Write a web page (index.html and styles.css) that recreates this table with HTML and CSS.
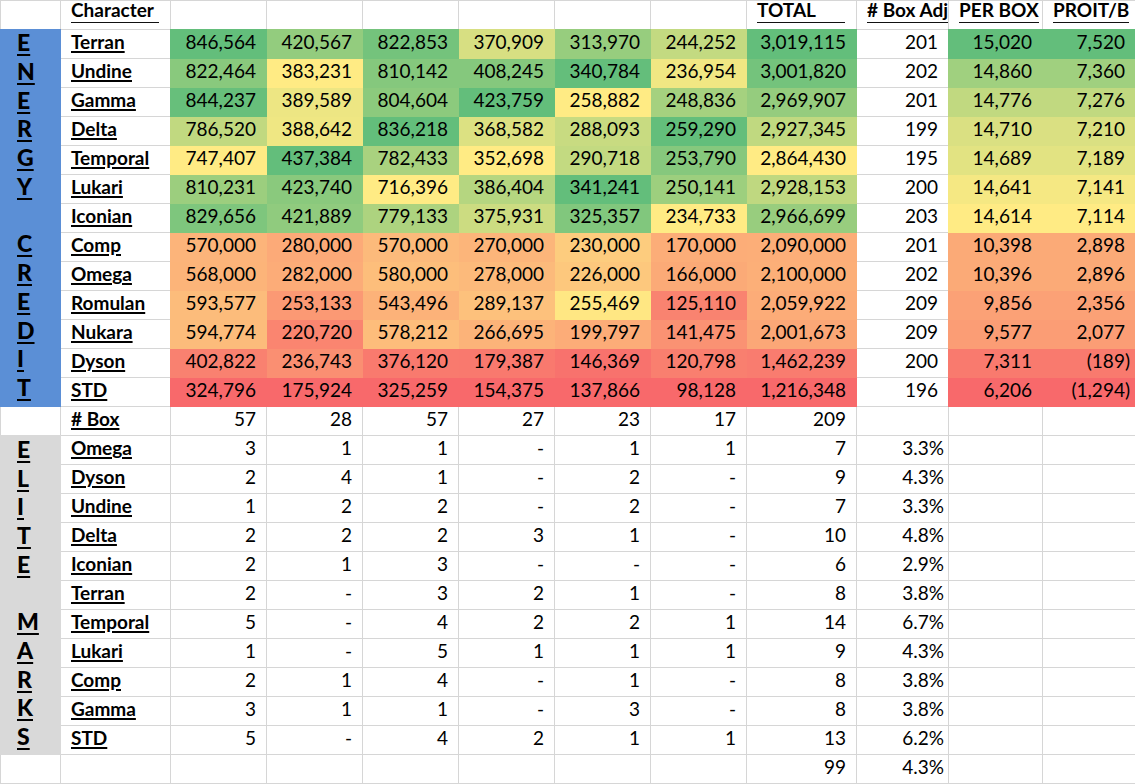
FILE: index.html
```html
<!DOCTYPE html>
<html lang="en">
<head>
<meta charset="utf-8">
<title>Box Profit Sheet</title>
<link rel="stylesheet" href="styles.css">
</head>
<body>
<table class="sheet">
<colgroup>
<col class="c-a"><col class="c-b"><col class="c-d"><col class="c-d"><col class="c-d"><col class="c-d"><col class="c-d"><col class="c-d"><col class="c-t"><col class="c-x"><col class="c-p"><col class="c-q">
</colgroup>
<tbody>
<tr class="hd">
<td></td><td class="h"><span class="hl w88">Character</span></td><td></td><td></td><td></td><td></td><td></td><td></td>
<td class="h"><span class="hl w88">TOTAL</span></td><td class="h"><span class="hl">#&nbsp;Box Adj</span></td><td class="h"><span class="hl w76">PER BOX</span></td><td class="h"><span class="hl">PROIT/B</span></td>
</tr>
<tr class="en">
<td class="side energy" rowspan="13"><div class="letters"><span><u>E</u></span><span><u>N</u></span><span><u>E</u></span><span><u>R</u></span><span><u>G</u></span><span><u>Y</u></span><span></span><span><u>C</u></span><span><u>R</u></span><span><u>E</u></span><span><u>D</u></span><span><u>I</u></span><span><u>T</u></span></div></td>
<td class="nm">Terran</td><td class="n sc">846,564</td><td class="n sc">420,567</td><td class="n sc">822,853</td><td class="n sc">370,909</td><td class="n sc">313,970</td><td class="n sc">244,252</td><td class="n sc">3,019,115</td><td class="n">201</td><td class="n sc">15,020</td><td class="n sc">7,520</td></tr>
<tr class="en"><td class="nm">Undine</td><td class="n sc">822,464</td><td class="n sc">383,231</td><td class="n sc">810,142</td><td class="n sc">408,245</td><td class="n sc">340,784</td><td class="n sc">236,954</td><td class="n sc">3,001,820</td><td class="n">202</td><td class="n sc">14,860</td><td class="n sc">7,360</td></tr>
<tr class="en"><td class="nm">Gamma</td><td class="n sc">844,237</td><td class="n sc">389,589</td><td class="n sc">804,604</td><td class="n sc">423,759</td><td class="n sc">258,882</td><td class="n sc">248,836</td><td class="n sc">2,969,907</td><td class="n">201</td><td class="n sc">14,776</td><td class="n sc">7,276</td></tr>
<tr class="en"><td class="nm">Delta</td><td class="n sc">786,520</td><td class="n sc">388,642</td><td class="n sc">836,218</td><td class="n sc">368,582</td><td class="n sc">288,093</td><td class="n sc">259,290</td><td class="n sc">2,927,345</td><td class="n">199</td><td class="n sc">14,710</td><td class="n sc">7,210</td></tr>
<tr class="en"><td class="nm">Temporal</td><td class="n sc">747,407</td><td class="n sc">437,384</td><td class="n sc">782,433</td><td class="n sc">352,698</td><td class="n sc">290,718</td><td class="n sc">253,790</td><td class="n sc">2,864,430</td><td class="n">195</td><td class="n sc">14,689</td><td class="n sc">7,189</td></tr>
<tr class="en"><td class="nm">Lukari</td><td class="n sc">810,231</td><td class="n sc">423,740</td><td class="n sc">716,396</td><td class="n sc">386,404</td><td class="n sc">341,241</td><td class="n sc">250,141</td><td class="n sc">2,928,153</td><td class="n">200</td><td class="n sc">14,641</td><td class="n sc">7,141</td></tr>
<tr class="en"><td class="nm">Iconian</td><td class="n sc">829,656</td><td class="n sc">421,889</td><td class="n sc">779,133</td><td class="n sc">375,931</td><td class="n sc">325,357</td><td class="n sc">234,733</td><td class="n sc">2,966,699</td><td class="n">203</td><td class="n sc">14,614</td><td class="n sc">7,114</td></tr>
<tr class="en"><td class="nm">Comp</td><td class="n sc">570,000</td><td class="n sc">280,000</td><td class="n sc">570,000</td><td class="n sc">270,000</td><td class="n sc">230,000</td><td class="n sc">170,000</td><td class="n sc">2,090,000</td><td class="n">201</td><td class="n sc">10,398</td><td class="n sc">2,898</td></tr>
<tr class="en"><td class="nm">Omega</td><td class="n sc">568,000</td><td class="n sc">282,000</td><td class="n sc">580,000</td><td class="n sc">278,000</td><td class="n sc">226,000</td><td class="n sc">166,000</td><td class="n sc">2,100,000</td><td class="n">202</td><td class="n sc">10,396</td><td class="n sc">2,896</td></tr>
<tr class="en"><td class="nm">Romulan</td><td class="n sc">593,577</td><td class="n sc">253,133</td><td class="n sc">543,496</td><td class="n sc">289,137</td><td class="n sc">255,469</td><td class="n sc">125,110</td><td class="n sc">2,059,922</td><td class="n">209</td><td class="n sc">9,856</td><td class="n sc">2,356</td></tr>
<tr class="en"><td class="nm">Nukara</td><td class="n sc">594,774</td><td class="n sc">220,720</td><td class="n sc">578,212</td><td class="n sc">266,695</td><td class="n sc">199,797</td><td class="n sc">141,475</td><td class="n sc">2,001,673</td><td class="n">209</td><td class="n sc">9,577</td><td class="n sc">2,077</td></tr>
<tr class="en"><td class="nm">Dyson</td><td class="n sc">402,822</td><td class="n sc">236,743</td><td class="n sc">376,120</td><td class="n sc">179,387</td><td class="n sc">146,369</td><td class="n sc">120,798</td><td class="n sc">1,462,239</td><td class="n">200</td><td class="n sc">7,311</td><td class="n sc ng">(189)</td></tr>
<tr class="en"><td class="nm">STD</td><td class="n sc">324,796</td><td class="n sc">175,924</td><td class="n sc">325,259</td><td class="n sc">154,375</td><td class="n sc">137,866</td><td class="n sc">98,128</td><td class="n sc">1,216,348</td><td class="n">196</td><td class="n sc">6,206</td><td class="n sc ng">(1,294)</td></tr>
<tr><td></td><td class="nm">#&nbsp;Box</td><td class="n">57</td><td class="n">28</td><td class="n">57</td><td class="n">27</td><td class="n">23</td><td class="n">17</td><td class="n">209</td><td></td><td></td><td></td></tr>
<tr>
<td class="side elite" rowspan="11"><div class="letters"><span><u>E</u></span><span><u>L</u></span><span><u>I</u></span><span><u>T</u></span><span><u>E</u></span><span></span><span><u>M</u></span><span><u>A</u></span><span><u>R</u></span><span><u>K</u></span><span><u>S</u></span></div></td>
<td class="nm">Omega</td><td class="n">3</td><td class="n">1</td><td class="n">1</td><td class="n">-</td><td class="n">1</td><td class="n">1</td><td class="n">7</td><td class="n p">3.3%</td><td></td><td></td></tr>
<tr><td class="nm">Dyson</td><td class="n">2</td><td class="n">4</td><td class="n">1</td><td class="n">-</td><td class="n">2</td><td class="n">-</td><td class="n">9</td><td class="n p">4.3%</td><td></td><td></td></tr>
<tr><td class="nm">Undine</td><td class="n">1</td><td class="n">2</td><td class="n">2</td><td class="n">-</td><td class="n">2</td><td class="n">-</td><td class="n">7</td><td class="n p">3.3%</td><td></td><td></td></tr>
<tr><td class="nm">Delta</td><td class="n">2</td><td class="n">2</td><td class="n">2</td><td class="n">3</td><td class="n">1</td><td class="n">-</td><td class="n">10</td><td class="n p">4.8%</td><td></td><td></td></tr>
<tr><td class="nm">Iconian</td><td class="n">2</td><td class="n">1</td><td class="n">3</td><td class="n">-</td><td class="n">-</td><td class="n">-</td><td class="n">6</td><td class="n p">2.9%</td><td></td><td></td></tr>
<tr><td class="nm">Terran</td><td class="n">2</td><td class="n">-</td><td class="n">3</td><td class="n">2</td><td class="n">1</td><td class="n">-</td><td class="n">8</td><td class="n p">3.8%</td><td></td><td></td></tr>
<tr><td class="nm">Temporal</td><td class="n">5</td><td class="n">-</td><td class="n">4</td><td class="n">2</td><td class="n">2</td><td class="n">1</td><td class="n">14</td><td class="n p">6.7%</td><td></td><td></td></tr>
<tr><td class="nm">Lukari</td><td class="n">1</td><td class="n">-</td><td class="n">5</td><td class="n">1</td><td class="n">1</td><td class="n">1</td><td class="n">9</td><td class="n p">4.3%</td><td></td><td></td></tr>
<tr><td class="nm">Comp</td><td class="n">2</td><td class="n">1</td><td class="n">4</td><td class="n">-</td><td class="n">1</td><td class="n">-</td><td class="n">8</td><td class="n p">3.8%</td><td></td><td></td></tr>
<tr><td class="nm">Gamma</td><td class="n">3</td><td class="n">1</td><td class="n">1</td><td class="n">-</td><td class="n">3</td><td class="n">-</td><td class="n">8</td><td class="n p">3.8%</td><td></td><td></td></tr>
<tr><td class="nm">STD</td><td class="n">5</td><td class="n">-</td><td class="n">4</td><td class="n">2</td><td class="n">1</td><td class="n">1</td><td class="n">13</td><td class="n p">6.2%</td><td></td><td></td></tr>
<tr><td></td><td></td><td></td><td></td><td></td><td></td><td></td><td></td><td class="n">99</td><td class="n p">4.3%</td><td></td><td></td></tr>
</tbody>
</table>
<script src="script.js"></script>
</body>
</html>
```
FILE: styles.css
```css
* { box-sizing: border-box; }
body {
  margin: 0;
  background: #ffffff;
  color: #000000;
  font-family: Lato, "Open Sans", "Liberation Sans", sans-serif;
}
.sheet {
  border-collapse: collapse;
  table-layout: fixed;
  width: 1135px;
  font-size: 19px;
}
.c-a { width: 60px; }
.c-b { width: 110px; }
.c-d { width: 96px; }
.c-t { width: 110px; }
.c-x { width: 92px; }
.c-p { width: 94px; }
.c-q { width: 93px; }
.sheet tr { height: 29px; }
.sheet td {
  border: 1px solid #d6d6d6;
  padding: 0 0 5px 0;
  line-height: 22px;
  vertical-align: bottom;
  white-space: nowrap;
  overflow: visible;
}
.sheet td.sc { border-style: double; }
.n { text-align: right; padding-right: 10px !important; }
.n.p { padding-right: 4px !important; }
.n.ng { padding-right: 5px !important; }
.nm {
  padding-left: 10px !important;
  font-weight: 700;
  text-decoration: underline;
  text-decoration-thickness: 2px;
  text-underline-offset: 2px;
}
.hd td { vertical-align: top; padding: 1px 0 0 0; line-height: 16px; }
.hd td.h { padding-left: 10px; font-weight: 700; }
.hl {
  display: inline-block;
  padding-bottom: 4px;
  border-bottom: 1px solid #111;
}
.w88 { min-width: 88px; }
.w76 { min-width: 77px; }
.side { vertical-align: top !important; padding: 0 !important; }
.sheet td.energy { background: #5b8fd6; border-style: double; border-color: #5b8fd6; padding-top: 2px !important; }
.sheet td.elite { background: #d9d9d9; border-style: double; border-color: #d9d9d9; }
.letters {
  display: flex;
  flex-direction: column;
  padding-left: 16px;
  font-size: 23px;
  font-weight: 900;
}
.letters span { display: block; height: 28.75px; line-height: 20px; }
.elite .letters span { line-height: 26px; height: 28.7px; }
.letters u {
  text-decoration-thickness: 2px;
  text-underline-offset: 3px;
}
```
FILE: script.js
```js
(function () {
  var RED = [248, 105, 107], YEL = [255, 235, 132], GRN = [99, 190, 123];
  function parse(t) {
    var neg = t.indexOf('(') >= 0;
    var v = parseFloat(t.replace(/[(),]/g, ''));
    return neg ? -v : v;
  }
  function mix(a, b, t) {
    return 'rgb(' + a.map(function (x, i) { return Math.round(x + (b[i] - x) * t); }).join(',') + ')';
  }
  var rows = Array.prototype.slice.call(document.querySelectorAll('tr.en'));
  var cols = [];
  rows.forEach(function (r) {
    r.querySelectorAll('.sc').forEach(function (td, i) {
      (cols[i] = cols[i] || []).push(td);
    });
  });
  cols.forEach(function (cells) {
    var vals = cells.map(function (c) { return parse(c.textContent); });
    var s = vals.slice().sort(function (a, b) { return a - b; });
    var min = s[0], max = s[s.length - 1];
    var pos = (s.length - 1) * 0.5, lo = Math.floor(pos);
    var mid = s[lo] + (s[Math.ceil(pos)] - s[lo]) * (pos - lo);
    cells.forEach(function (c, i) {
      var v = vals[i], col;
      if (v <= mid) col = mix(RED, YEL, mid === min ? 1 : (v - min) / (mid - min));
      else col = mix(YEL, GRN, (v - mid) / (max - mid));
      c.style.backgroundColor = col;
      c.style.borderColor = col;
    });
  });
})();
```
